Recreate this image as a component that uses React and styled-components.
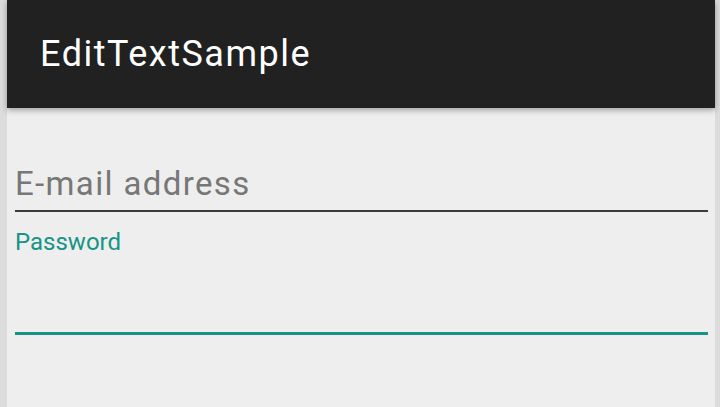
import styled, { createGlobalStyle } from "styled-components";

const GlobalStyle = createGlobalStyle`
  html, body {
    margin: 0;
    padding: 0;
    height: 100%;
    background: #dcdcdc;
    font-family: Roboto, "Noto Sans", sans-serif;
  }
  #root {
    height: 100%;
  }
`;

const Frame = styled.div`
  height: 100%;
  margin: 0 5px 0 7px;
  background: #eeeeee;
  display: flex;
  flex-direction: column;
`;

const Toolbar = styled.header`
  height: 108px;
  flex-shrink: 0;
  background: #212121;
  display: flex;
  align-items: center;
  padding-left: 33px;
  box-shadow: 0 2px 6px rgba(0, 0, 0, 0.35);
  position: relative;
  z-index: 1;
`;

const Title = styled.h1`
  margin: 0;
  font-size: 36px;
  letter-spacing: 1.5px;
  font-weight: 400;
  color: #ffffff;
`;

const Form = styled.div`
  padding: 56px 7px 0 8px;
  display: flex;
  flex-direction: column;
`;

const Field = styled.div`
  display: flex;
  flex-direction: column;
  border-bottom: ${(p) => (p.$active ? "3px solid #179486" : "2px solid #3b3b3b")};
`;

const Placeholder = styled.div`
  font-size: 33px;
  letter-spacing: 1.35px;
  color: #777777;
  line-height: 40px;
  height: 46px;
`;

const Label = styled.div`
  font-size: 24px;
  color: #179486;
  line-height: 28px;
  margin-top: 16px;
`;

const Blank = styled.div`
  height: 76px;
`;

export default function App() {
  return (
    <Frame>
      <GlobalStyle />
      <Toolbar>
        <Title>EditTextSample</Title>
      </Toolbar>
      <Form>
        <Field>
          <Placeholder>E-mail address</Placeholder>
        </Field>
        <Field $active>
          <Label>Password</Label>
          <Blank />
        </Field>
      </Form>
    </Frame>
  );
}
